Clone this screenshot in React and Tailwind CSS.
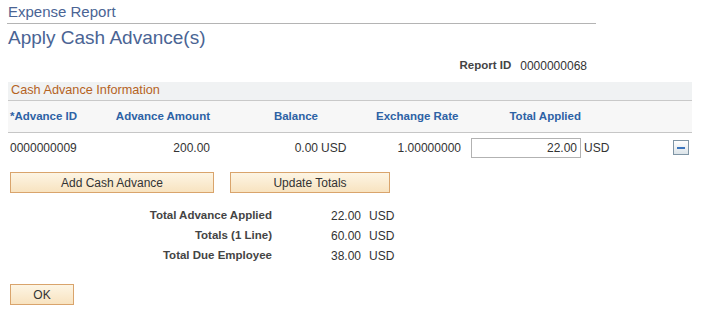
import React from 'react';

const btn = "h-[21px] border border-[#d9a46c] bg-gradient-to-b from-[#fdf5e4] to-[#f8e3c0] text-[12px] text-[#333] leading-none flex items-center justify-center";

const rows = [
  { label: 'Total Advance Applied', value: '22.00' },
  { label: 'Totals (1 Line)', value: '60.00' },
  { label: 'Total Due Employee', value: '38.00' },
];

const App = () => {
  return (
    <div className="w-[706px] h-[336px] bg-white pl-[8px] pt-[3px] font-['Liberation_Sans',Arial,sans-serif] text-[#333]">
      {/* page heading */}
      <div className="w-[589px] -ml-px pl-px pb-[3px] border-b border-[#b4b4b4] text-[15px] leading-[17px] text-[#4a6494]">Expense Report</div>
      <h1 className="mt-[3px] text-[19px] leading-[22px] text-[#4a6494]">Apply Cash Advance(s)</h1>

      <div className="mt-[9px] w-[579px] h-[16px] flex items-center justify-end gap-[9px] text-[11.5px]">
        <span className="font-bold text-[#444]">Report ID</span>
        <span className="text-[12px]">0000000068</span>
      </div>

      {/* grid section */}
      <div className="mt-[8px] w-[684px]">
        <div className="h-[19px] bg-[#f0f2f3] border-b border-[#c9c9c9] flex items-center pl-[3px] text-[12.7px] text-[#b5631f]">Cash Advance Information</div>
        <div className="h-[32px] bg-[#f7f7f7] border-b border-[#c6c6c6] flex items-center text-[11.5px] font-bold text-[#2d62a5]">
          <div className="w-[102px] pl-[2px]">*Advance ID</div>
          <div className="w-[100px] text-right">Advance Amount</div>
          <div className="w-[108px] text-right">Balance</div>
          <div className="w-[58px]"></div>
          <div className="w-[85px]">Exchange Rate</div>
          <div className="w-[120px] text-right">Total Applied</div>
        </div>
        <div className="h-[29px] flex items-center text-[12px]">
          <div className="w-[102px] pl-[2px]">0000000009</div>
          <div className="w-[100px] text-right">200.00</div>
          <div className="w-[108px] text-right">0.00</div>
          <div className="w-[58px] pl-[3px]">USD</div>
          <div className="w-[85px] text-right">1.00000000</div>
          <div className="w-[120px] flex justify-end">
            <div className="w-[110px] h-[20px] border border-[#b2b2b2] bg-white flex items-center justify-end pr-[3px]">22.00</div>
          </div>
          <div className="w-[92px] pl-[3px]">USD</div>
          <div className="w-[16px] h-[15px] border border-[#7f95a5] bg-gradient-to-b from-white to-[#dce4e9] flex items-center justify-center">
            <div className="w-[8px] h-[2px] bg-[#3b75bd]"></div>
          </div>
        </div>
      </div>

      <div className="mt-[10px] flex gap-[16px] pl-[2px]">
        <div className={`${btn} w-[204px]`}>Add Cash Advance</div>
        <div className={`${btn} w-[160px]`}>Update Totals</div>
      </div>

      {/* totals */}
      <div className="mt-[13px] flex flex-col">
        {rows.map((r) => (
          <div key={r.label} className="h-[20px] flex items-center">
            <div className="w-[264px] text-right text-[11.5px] font-bold text-[#444]">{r.label}</div>
            <div className="w-[89px] text-right text-[12px]">{r.value}</div>
            <div className="pl-[8px] text-[12px]">USD</div>
          </div>
        ))}
      </div>

      <div className="mt-[18px] pl-[2px]">
        <div className={`${btn} w-[64px]`}>OK</div>
      </div>
    </div>
  );
};

export default App;
